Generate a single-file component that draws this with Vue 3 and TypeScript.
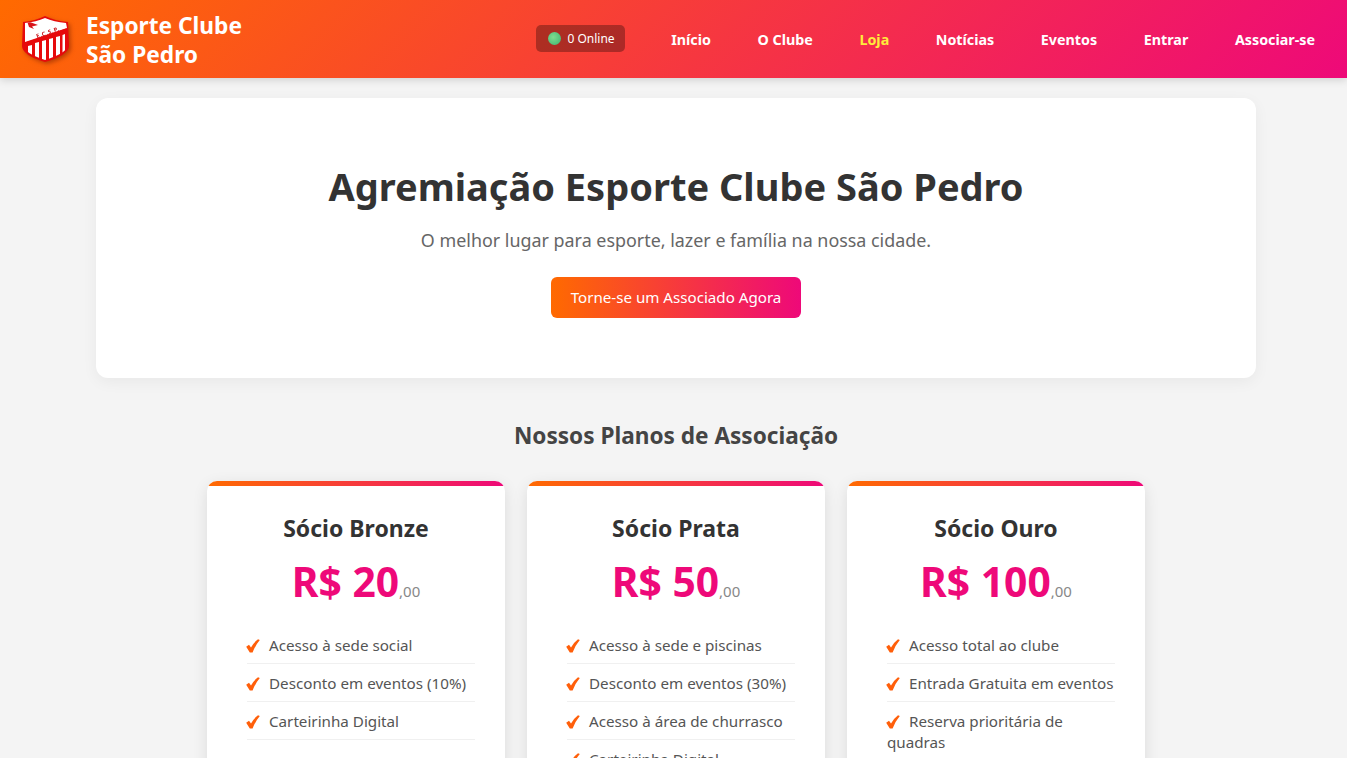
<script setup lang="ts">
interface Plan { name: string; price: string; features: string[] }
const nav = ['Início', 'O Clube', 'Loja', 'Notícias', 'Eventos', 'Entrar', 'Associar-se']
const plans: Plan[] = [
  { name: 'Sócio Bronze', price: 'R$ 20', features: ['Acesso à sede social', 'Desconto em eventos (10%)', 'Carteirinha Digital'] },
  { name: 'Sócio Prata', price: 'R$ 50', features: ['Acesso à sede e piscinas', 'Desconto em eventos (30%)', 'Acesso à área de churrasco', 'Carteirinha Digital'] },
  { name: 'Sócio Ouro', price: 'R$ 100', features: ['Acesso total ao clube', 'Entrada Gratuita em eventos', 'Reserva prioritária de quadras', 'Carteirinha Digital'] }
]
</script>

<template>
  <div class="page">
    <header class="header">
      <div class="brand">
        <svg class="crest" viewBox="0 0 48 50" width="48" height="50">
          <defs>
            <clipPath id="shield"><path d="M3 9 Q14 8 23 4 Q32 8 44 9 L45 32 Q45 39 23 46 Q2 39 2 32 Z" /></clipPath>
          </defs>
          <path d="M1 8 Q13 7 23 2 Q33 7 46 8 L47 32 Q47 41 23 48 Q0 41 0 32 Z" fill="#e60a0c" />
          <path d="M3 9 Q14 8 23 4 Q32 8 44 9 L45 14 L3 28 Z" fill="#fff" />
          <g clip-path="url(#shield)">
            <path d="M2 29 L46 14 L46 17 L2 32 Z" fill="#e60a0c" />
            <path d="M6 32 L10 31 L10 48 L6 48 Z M13 29 L17 28 L17 48 L13 48 Z M20 27 L24 26 L24 48 L20 48 Z M27 25 L31 24 L31 48 L27 48 Z M34 23 L38 22 L38 48 L34 48 Z M40.500 21 L43 20 L43 48 L40.500 48 Z" fill="#fff" />
            <path d="M5 7 L16 11 L10 12.500 L12 15 L7 13 Z" fill="#d9141a" />
          </g>
          <text x="26" y="20.500" class="crest-text" text-anchor="middle" transform="rotate(-19 26 19)">E.C.S.P.</text>
        </svg>
        <div class="brand-name">Esporte Clube<br />São Pedro</div>
      </div>
      <nav class="nav">
        <div class="online"><span class="dot"></span>0 Online</div>
        <a v-for="item in nav" :key="item" class="nav-link" :class="{ active: item === 'Loja' }">{{ item }}</a>
      </nav>
    </header>

    <main class="main">
      <section class="hero">
        <h1>Agremiação Esporte Clube São Pedro</h1>
        <p>O melhor lugar para esporte, lazer e família na nossa cidade.</p>
        <a class="cta">Torne-se um Associado Agora</a>
      </section>

      <h2 class="plans-title">Nossos Planos de Associação</h2>

      <div class="plans">
        <article v-for="plan in plans" :key="plan.name" class="card">
          <h3>{{ plan.name }}</h3>
          <div class="price">{{ plan.price }}<span>,00</span></div>
          <ul>
            <li v-for="f in plan.features" :key="f">
              <svg class="check" viewBox="0 0 14 14" width="14" height="14">
                <path d="M0.2 7.8 L3 5.800 L5 8.400 Q7.600 3.600 12 0.200 L13.800 1 Q9.200 6.400 6.600 13.600 L3.800 13.600 Z" fill="#ff5f0a" />
              </svg>{{ f }}
            </li>
          </ul>
        </article>
      </div>
    </main>
  </div>
</template>

<style>
html, body { margin: 0; background: #f4f4f4; }
</style>

<style scoped>
.page {
  height: 758px;
  overflow: hidden;
  background: #f4f4f4;
  font-family: "Noto Sans", "Open Sans", sans-serif;
  color: #333;
}
.header {
  height: 78px;
  box-sizing: border-box;
  padding: 0 32px 0 22px;
  display: flex;
  align-items: center;
  justify-content: space-between;
  background: linear-gradient(135deg, #ff6a00, #ee0979);
  box-shadow: 0 2px 8px rgba(0, 0, 0, 0.15);
  position: relative;
}
.brand { display: flex; align-items: center; gap: 16px; }
.crest { filter: drop-shadow(2px 2px 2px rgba(120, 30, 0, 0.5)); }
.crest-text { font-size: 5.8px; font-weight: 700; fill: #c8141a; letter-spacing: 0.6px; }
.brand-name { color: #fff; font-size: 22.7px; font-weight: 700; line-height: 29px; padding-top: 1px; }
.nav { display: flex; align-items: center; gap: 46.6px; }
.online {
  display: flex;
  align-items: center;
  gap: 6px;
  height: 27px;
  margin-top: -1px;
  padding: 0 10px 0 12px;
  border-radius: 5px;
  background: rgba(0, 0, 0, 0.3);
  color: #fff;
  font-size: 12px;
}
.dot {
  width: 13px;
  height: 13px;
  border-radius: 50%;
  background: radial-gradient(circle at 40% 40%, #7fdc8f, #3bb56f);
}
.nav-link { color: #fff; font-weight: 700; font-size: 14.3px; }
.nav-link.active { color: #ffeb3b; }
.main { width: 1160px; margin-left: 96px; padding-top: 20px; }
.hero {
  box-sizing: border-box;
  height: 280px;
  padding-top: 59px;
  background: #fff;
  border-radius: 12px;
  box-shadow: 0 4px 15px rgba(0, 0, 0, 0.05);
  text-align: center;
}
h1 { margin: 0; font-size: 38px; line-height: 58px; font-weight: 700; color: #333; }
.hero p { margin: 12px 0 0; font-size: 17.9px; line-height: 26px; color: #666; }
.cta {
  display: inline-block;
  margin-top: 24px;
  padding: 0 20px;
  height: 41px;
  line-height: 41px;
  border-radius: 6px;
  color: #fff;
  font-size: 15.15px;
  background: linear-gradient(90deg, #ff6a00, #ee0979);
}
.plans-title { margin: 40px 0 0; text-align: center; font-size: 22.6px; line-height: 36px; font-weight: 700; color: #444; }
.plans { display: flex; justify-content: center; gap: 22px; margin-top: 27px; }
.card {
  position: relative;
  width: 298px;
  box-sizing: border-box;
  padding: 29px 30px 30px;
  background: #fff;
  border-radius: 10px;
  box-shadow: 0 4px 15px rgba(0, 0, 0, 0.1);
  overflow: hidden;
  text-align: center;
}
.card::before {
  content: "";
  position: absolute;
  left: 0;
  right: 0;
  top: 0;
  height: 5px;
  background: linear-gradient(90deg, #ff6a00, #ee0979);
}
h3 { margin: 0; font-size: 23px; line-height: 36px; font-weight: 700; color: #333; }
.price { margin-top: 8px; font-size: 40.8px; line-height: 54px; font-weight: 700; color: #ee0979; }
.price span { font-size: 15px; font-weight: 400; color: #888; }
ul { list-style: none; margin: 8px 0 0 10px; padding: 0; text-align: left; }
li { padding: 9px 0 7px; border-bottom: 1px solid #f0f0f0; font-size: 15.2px; line-height: 21px; color: #555; }
.check { vertical-align: -2px; margin-right: 9px; margin-left: -1px; }
</style>
